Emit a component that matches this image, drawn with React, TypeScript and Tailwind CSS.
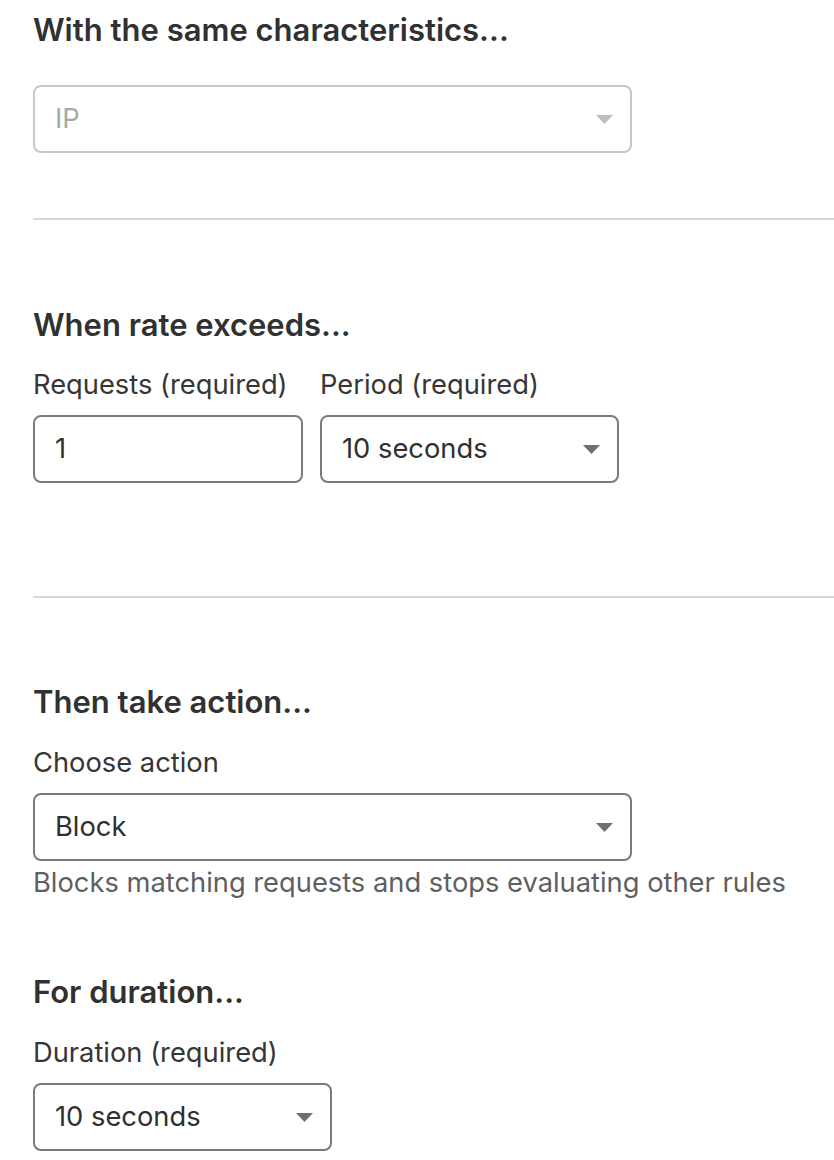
import type { ReactNode } from 'react';

const FONT = "font-['Inter','Noto_Sans',sans-serif]";

function Caret({ muted }: { muted?: boolean }) {
  return (
    <svg
      width="17"
      height="9"
      viewBox="0 0 17 9"
      className={muted ? 'fill-[#bdbdbd]' : 'fill-[#6f7073]'}
    >
      <path d="M0 0h17L8.5 9z" />
    </svg>
  );
}

function SectionTitle({ children, className = '' }: { children: ReactNode; className?: string }) {
  return (
    <h2 className={`text-[31px] font-semibold leading-[36px] text-[#313131] ${className}`}>
      {children}
    </h2>
  );
}

function FieldLabel({ children, className = '' }: { children: ReactNode; className?: string }) {
  return <div className={`text-[27.3px] leading-[32px] text-[#363636] ${className}`}>{children}</div>;
}

function SelectBox({
  value,
  width,
  disabled,
  className = '',
}: {
  value: string;
  width: string;
  disabled?: boolean;
  className?: string;
}) {
  return (
    <div
      className={`flex h-[68px] items-center justify-between rounded-[8px] border-2 bg-white pl-[20px] pr-[17px] ${
        disabled ? 'border-[#c7c7c7] text-[#a8a8a8]' : 'border-[#7b7b7b] text-[#2f2f2f]'
      } ${width} ${className}`}
    >
      <span className="text-[27.3px] leading-[32px]">{value}</span>
      <Caret muted={disabled} />
    </div>
  );
}

function Divider({ className = '' }: { className?: string }) {
  return <div className={`h-[2px] bg-[#d9d9d9] ${className}`} />;
}

export default function App() {
  return (
    <div className={`min-h-[1160px] w-[834px] overflow-hidden bg-white pl-[33px] pt-[12px] ${FONT}`}>
      <SectionTitle>With the same characteristics...</SectionTitle>
      <SelectBox value="IP" width="w-[599px]" disabled className="mt-[37px]" />

      <Divider className="mt-[65px]" />

      <SectionTitle className="mt-[87px]">When rate exceeds...</SectionTitle>
      <div className="mt-[26px] flex gap-[17px]">
        <div className="flex flex-col gap-[14px]">
          <FieldLabel>Requests (required)</FieldLabel>
          <div className="flex h-[68px] w-[270px] items-center rounded-[8px] border-2 border-[#7b7b7b] pl-[20px] text-[27.3px] text-[#2f2f2f]">
            1
          </div>
        </div>
        <div className="flex flex-col gap-[14px]">
          <FieldLabel>Period (required)</FieldLabel>
          <SelectBox value="10 seconds" width="w-[299px]" />
        </div>
      </div>

      <Divider className="mt-[113px]" />

      <SectionTitle className="mt-[86px]">Then take action...</SectionTitle>
      <FieldLabel className="mt-[27px]">Choose action</FieldLabel>
      <SelectBox value="Block" width="w-[599px]" className="mt-[14px]" />
      <p className="mt-[6px] text-[27.3px] leading-[32px] text-[#5f5f5f]">
        Blocks matching requests and stops evaluating other rules
      </p>

      <SectionTitle className="mt-[75px]">For duration...</SectionTitle>
      <FieldLabel className="mt-[27px]">Duration (required)</FieldLabel>
      <SelectBox value="10 seconds" width="w-[299px]" className="mt-[14px]" />
    </div>
  );
}
